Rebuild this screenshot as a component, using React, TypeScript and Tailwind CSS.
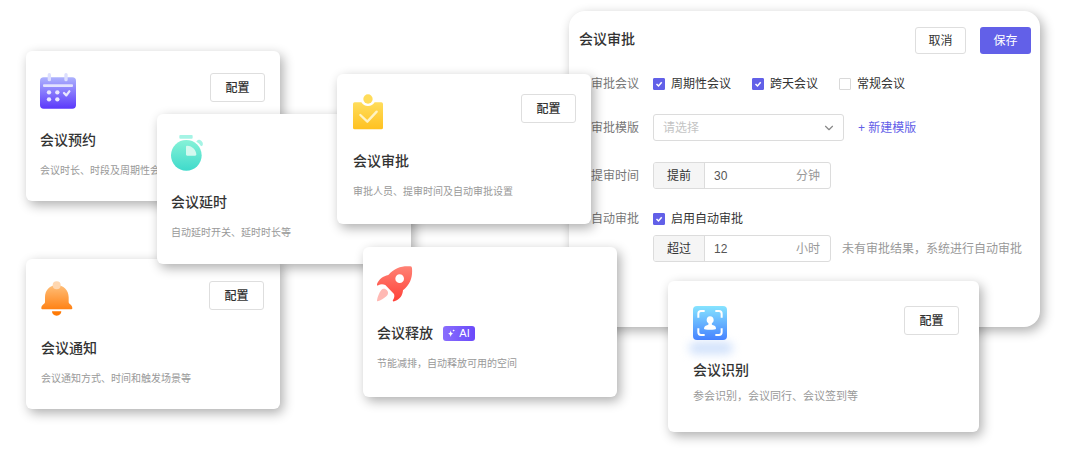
import type { ReactNode } from "react";
import { ChevronDown } from "lucide-react";

function CalendarIcon() {
	return (
		<svg width="36" height="36" viewBox="0 0 108 108" aria-hidden="true">
			<defs>
				<linearGradient id="calendar" x1="0" y1="0" x2="0" y2="1">
					<stop offset="0" stopColor="#adb2fd" />
					<stop offset="1" stopColor="#5b38fb" />
				</linearGradient>
			</defs>
			<rect y="13" width="108" height="94" rx="11" fill="url(#calendar)" />
			<rect x="23" y="0" width="10" height="25" rx="5" fill="#dcdefe" />
			<rect x="73" y="0" width="10" height="25" rx="5" fill="#dcdefe" />
			<rect x="9" y="34" width="90" height="8" rx="3" fill="#e2e2fe" />
			<g fill="#e9e6ff">
				<circle cx="27" cy="58" r="6.5" />
				<circle cx="52" cy="58" r="6.5" />
				<circle cx="27" cy="79" r="6.5" />
				<circle cx="52" cy="79" r="6.5" />
			</g>
			<path d="M72 60l7 7 9-12" fill="none" stroke="#e9e6ff" strokeWidth="7" strokeLinecap="round" strokeLinejoin="round" />
		</svg>
	);
}

function StopwatchIcon() {
	return (
		<svg width="32" height="36" viewBox="0 0 96 108" aria-hidden="true">
			<defs>
				<linearGradient id="stopwatch" x1="0" y1="0" x2="0" y2="1">
					<stop offset="0" stopColor="#86f2d7" />
					<stop offset="1" stopColor="#3fdacb" />
				</linearGradient>
			</defs>
			<rect x="25" y="0" width="40" height="11" rx="3" fill="#a5f4e5" />
			<path d="M78 17c4-4 10-3 14 2 4 4 5 9 2 13l-4 2c-3-7-7-10-14-14z" fill="#a5f4e5" />
			<circle cx="46" cy="61" r="46" fill="url(#stopwatch)" />
			<path d="M45 35c0-2 2-3 4-3 15 1 26 12 27 26 0 3-1 4-4 4H49c-3 0-4-1-4-4z" fill="#d3f9ef" />
		</svg>
	);
}

function ClipboardIcon() {
	return (
		<svg width="30" height="36" viewBox="0 0 90 108" aria-hidden="true">
			<defs>
				<linearGradient id="clipboard" x1="0" y1="0" x2="0" y2="1">
					<stop offset="0" stopColor="#ffdd5c" />
					<stop offset="1" stopColor="#ffc120" />
				</linearGradient>
			</defs>
			<path d="M5 25h20c4 7 11 11 20 11s16-4 20-11h20q5 0 5 5v71q0 5-5 5H5q-5 0-5-5V30q0-5 5-5z" fill="url(#clipboard)" />
			<circle cx="45" cy="15" r="14" fill="#ffdc5a" />
			<path d="M22 63l21 20 28-30" fill="none" stroke="#fff3c4" strokeWidth="7" strokeLinecap="round" strokeLinejoin="round" />
		</svg>
	);
}

function BellIcon() {
	return (
		<svg width="32" height="36" viewBox="0 0 96 108" aria-hidden="true">
			<defs>
				<linearGradient id="bell" x1="0" y1="0" x2="0" y2="1">
					<stop offset="0" stopColor="#ffbe78" />
					<stop offset="1" stopColor="#ff8215" />
				</linearGradient>
			</defs>
			<path d="M12 49c0-22 15-36 35-36s36 14 36 36v15c0 5 11 7 11 18 0 2-1 3-3 3H4c-2 0-3-1-3-3 0-11 11-13 11-18z" fill="url(#bell)" />
			<circle cx="47" cy="13" r="12" fill="#ffd7b0" />
			<path d="M33 91h28c0 7-5 13-14 13s-14-6-14-13z" fill="#ff7a05" />
		</svg>
	);
}

function RocketIcon() {
	return (
		<svg width="36" height="36" viewBox="0 0 108 108" aria-hidden="true">
			<defs>
				<linearGradient id="rocket" x1="0" y1="0" x2="0" y2="1">
					<stop offset="0" stopColor="#ff8275" />
					<stop offset="1" stopColor="#ff4138" />
				</linearGradient>
			</defs>
			<path
				fillRule="evenodd"
				d="M100 1q5 0 5 6C107 32 101 54 78 73c-1 15-9 27-26 33-4 1-6-1-4-4 4-7 5-12 3-18L25 57C18 54 10 54 4 58c-4 2-5-1-4-4C6 39 18 31 34 27 53 5 75-1 100 1zM68 25a13 13 0 1 0 0 26 13 13 0 0 0 0-26z"
				fill="url(#rocket)"
			/>
			<path d="M13 72c4-6 13-5 17 1 5 6 4 13-2 18-7 6-17 13-26 15-2 0-2-1-2-3 2-11 6-22 13-31z" fill="#ffb9b4" />
		</svg>
	);
}

function FaceScanIcon() {
	return (
		<div className="relative h-9">
			<div className="absolute -left-1 top-9 h-3 w-11 rounded-full bg-[#d0e1fb] blur-[5px]" />
			<svg className="relative" width="34" height="34" viewBox="0 0 102 102" aria-hidden="true">
				<defs>
					<linearGradient id="face" x1="0" y1="0" x2="0" y2="1">
						<stop offset="0" stopColor="#86e4ff" />
						<stop offset="1" stopColor="#4682ff" />
					</linearGradient>
				</defs>
				<rect width="102" height="102" rx="12" fill="url(#face)" />
				<path d="M16 35V23q0-8 8-8h11M67 15h11q8 0 8 8v12M86 67v12q0 8-8 8H67M35 87H24q-8 0-8-8V67" fill="none" stroke="#fff" strokeWidth="6" />
				<path d="M51 31c7 0 11 5 11 11 0 5-2 7-5 10-2 3 0 5 4 6 6 2 8 5 8 10 0 2-8 3-18 3s-18-1-18-3c0-5 3-8 9-10 4-1 6-3 4-6-3-3-5-5-5-10 0-6 4-11 10-11z" fill="#fff" />
			</svg>
		</div>
	);
}

function AiBadge() {
	return (
		<span className="flex h-[15px] w-8 items-center justify-center gap-1 rounded-[3px] bg-linear-to-r from-[#8a6dfd] to-[#6b49fa] text-[11px] leading-none text-white">
			<svg width="7" height="8" viewBox="0 0 21 24" fill="#fff" aria-hidden="true">
				<path d="M8 4c1 7 3 9 8 10-5 1-7 3-8 10-1-7-3-9-8-10 5-1 7-3 8-10zM17 0c.5 3 1 4 4 4.500-3 .5-3.500 1.500-4 4.500-.5-3-1-4-4-4.500 3-.5 3.500-1.500 4-4.500z" />
			</svg>
			AI
		</span>
	);
}

type CardProps = {
	icon: ReactNode;
	title: string;
	desc: string;
	className: string;
	titleClass?: string;
	descClass?: string;
	badge?: ReactNode;
	action?: boolean;
};

function FeatureCard({
	icon,
	title,
	desc,
	className,
	titleClass = "mt-[21px]",
	descClass = "mt-[13px] text-[10px]",
	badge,
	action = true,
}: CardProps) {
	return (
		<section className={`absolute rounded-md bg-white shadow-[3px_4px_12px_rgba(0,0,0,0.32)] ${className}`}>
			<div className="flex h-9 items-start justify-between">
				{icon}
				{action && (
					<button type="button" className="h-[29px] w-[55px] rounded-[3px] border border-[#dedede] bg-white text-xs font-medium text-[#333]">
						配置
					</button>
				)}
			</div>
			<div className={`flex items-center gap-2.5 ${titleClass}`}>
				<h2 className="text-sm leading-5 font-medium text-[#333]">{title}</h2>
				{badge}
			</div>
			<p className={`leading-4 whitespace-nowrap text-[#999] ${descClass}`}>{desc}</p>
		</section>
	);
}

function Check({ label, checked = false }: { label: string; checked?: boolean }) {
	return (
		<label className="flex items-center gap-1.5 text-[#333]">
			<span className="grid">
				<input
					type="checkbox"
					defaultChecked={checked}
					className="peer col-start-1 row-start-1 size-3 appearance-none rounded-[1px] border border-[#d9d9d9] bg-white checked:border-[#6260e8] checked:bg-[#6260e8]"
				/>
				<svg className="pointer-events-none invisible col-start-1 row-start-1 size-3 peer-checked:visible" viewBox="0 0 12 12" aria-hidden="true">
					<path d="M3.500 6l2 2 3.200-3.700" fill="none" stroke="#fff" strokeWidth="1.500" />
				</svg>
			</span>
			{label}
		</label>
	);
}

function AmountField({ id, prefix, value, unit }: { id: string; prefix: string; value: string; unit: string }) {
	return (
		<div className="flex h-[27px] w-[178px] overflow-hidden rounded-[3px] border border-[#dcdcdc]">
			<label htmlFor={id} className="flex w-[51px] items-center justify-center border-r border-[#dcdcdc] bg-[#f5f5f5] text-[#333]">
				{prefix}
			</label>
			<input id={id} defaultValue={value} className="min-w-0 flex-1 pl-[9px] text-[#555] outline-none" />
			<span className="flex items-center pr-2.5 text-[#999]">{unit}</span>
		</div>
	);
}

function Row({ label, className, children }: { label: string; className: string; children: ReactNode }) {
	return (
		<div className={`flex items-center ${className}`}>
			<span className="mr-3.5 w-12 shrink-0 whitespace-nowrap text-[#777]">{label}</span>
			{children}
		</div>
	);
}

function ApprovalPanel() {
	return (
		<form className="absolute top-[11px] left-[569px] w-[471px] rounded-2xl bg-white pt-4 pr-[9px] pb-[65px] pl-2.5 text-xs shadow-[3px_4px_12px_rgba(0,0,0,0.32)]">
			<header className="flex items-start gap-3.5">
				<h1 className="mr-auto text-sm leading-6 font-medium text-[#333]">会议审批</h1>
				<button type="button" className="h-[27px] w-[51px] rounded-[3px] border border-[#dedede] bg-white text-[#333]">
					取消
				</button>
				<button type="button" className="h-[27px] w-[51px] rounded-[3px] bg-[#6260e8] text-white">
					保存
				</button>
			</header>
			<div className="pl-3">
				<Row label="审批会议" className="mt-[18px] h-6">
					<div className="flex gap-[21px]">
						<Check label="周期性会议" checked />
						<Check label="跨天会议" checked />
						<Check label="常规会议" />
					</div>
				</Row>
				<Row label="审批模版" className="mt-[18px]">
					<div className="grid items-center">
						<select aria-label="审批模版" className="col-start-1 row-start-1 h-[27px] w-[191px] appearance-none rounded-[3px] border border-[#dcdcdc] bg-white pl-[9px] text-[#c4c4c4]">
							<option>请选择</option>
						</select>
						<ChevronDown className="pointer-events-none col-start-1 row-start-1 mr-2 size-3.5 justify-self-end text-[#888]" strokeWidth={2} />
					</div>
					<a href="#new" className="ml-3.5 text-[#6260e8]">
						+ 新建模版
					</a>
				</Row>
				<Row label="提审时间" className="mt-[21px]">
					<AmountField id="lead" prefix="提前" value="30" unit="分钟" />
				</Row>
				<Row label="自动审批" className="mt-[18px] h-6">
					<Check label="启用自动审批" checked />
				</Row>
				<div className="mt-1 flex items-center gap-[11px] pl-[62px]">
					<AmountField id="timeout" prefix="超过" value="12" unit="小时" />
					<span className="whitespace-nowrap text-[#999]">未有审批结果，系统进行自动审批</span>
				</div>
			</div>
		</form>
	);
}

export default function App() {
	return (
		<main className="relative min-h-screen w-full overflow-hidden bg-white font-['Liberation_Sans','Noto_Sans_CJK_SC',sans-serif]">
			<ApprovalPanel />
			<FeatureCard
				icon={<CalendarIcon />}
				title="会议预约"
				desc="会议时长、时段及周期性会议设置"
				className="top-[51px] left-[26px] h-[150px] w-[254px] pt-[22px] pr-[15px] pl-3.5"
			/>
			<FeatureCard
				icon={<BellIcon />}
				title="会议通知"
				desc="会议通知方式、时间和触发场景等"
				className="top-[259px] left-[26px] h-[150px] w-[254px] pt-[22px] pr-4 pl-[15px]"
			/>
			<FeatureCard
				icon={<StopwatchIcon />}
				title="会议延时"
				desc="自动延时开关、延时时长等"
				className="top-[114px] left-[157px] h-[150px] w-[254px] pt-[21px] pr-[15px] pl-3.5"
				action={false}
			/>
			<FeatureCard
				icon={<ClipboardIcon />}
				title="会议审批"
				desc="审批人员、提审时间及自动审批设置"
				className="top-[74px] left-[337px] h-[150px] w-[254px] pt-5 pr-[15px] pl-4"
			/>
			<FeatureCard
				icon={<RocketIcon />}
				title="会议释放"
				desc="节能减排，自动释放可用的空间"
				className="top-[247px] left-[363px] h-[150px] w-[254px] pt-[19px] pr-[15px] pl-3.5"
				badge={<AiBadge />}
				action={false}
			/>
			<FeatureCard
				icon={<FaceScanIcon />}
				title="会议识别"
				desc="参会识别，会议同行、会议签到等"
				className="top-[281px] left-[668px] h-[151px] w-[311px] pt-[25px] pr-5 pl-[25px]"
				titleClass="mt-[18px]"
				descClass="mt-2 text-[11px]"
			/>
		</main>
	);
}
